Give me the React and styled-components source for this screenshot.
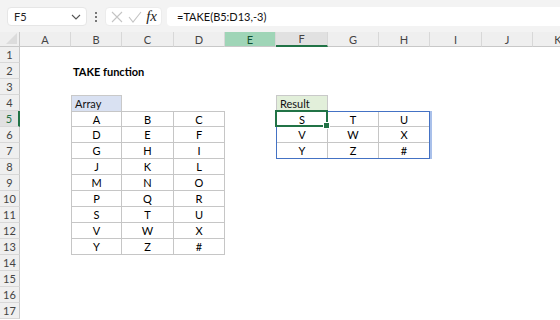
import React from "react";
import styled, { createGlobalStyle } from "styled-components";

const GlobalStyle = createGlobalStyle`
  body {
    margin: 0;
    background: #fff;
    font-family: "Lato", "Open Sans", sans-serif;
  }
`;

const COLS = ["A", "B", "C", "D", "E", "F", "G", "H", "I", "J", "K"];
const WIDTHS = [51, 51, 52, 51, 51, 52, 51, 51, 52, 51, 51];
const ROWS = 17;

const ARRAY = [
  ["A", "B", "C"],
  ["D", "E", "F"],
  ["G", "H", "I"],
  ["J", "K", "L"],
  ["M", "N", "O"],
  ["P", "Q", "R"],
  ["S", "T", "U"],
  ["V", "W", "X"],
  ["Y", "Z", "#"],
];

const RESULT = ARRAY.slice(-3);

const Window = styled.div`
  width: 560px;
  height: 320px;
  overflow: hidden;
  background: #fff;
`;

const TopBar = styled.div`
  height: 32px;
  box-sizing: border-box;
  background: #f3f3f3;
  display: flex;
  align-items: flex-start;
  padding: 7px 0 0 7px;
`;

const NameBox = styled.div`
  width: 80px;
  height: 19px;
  box-sizing: border-box;
  background: #fff;
  border: 1px solid #e6e6e6;
  border-radius: 4px;
  display: flex;
  align-items: center;
  justify-content: space-between;
  padding: 0 5px 0 6px;
  font-size: 11px;
  color: #222;
`;

const Dots = styled.div`
  width: 18px;
  height: 19px;
  display: flex;
  flex-direction: column;
  align-items: center;
  justify-content: center;
  gap: 2px;

  span {
    width: 2px;
    height: 2px;
    background: #777;
  }
`;

const IconBox = styled.div`
  width: 57px;
  height: 19px;
  box-sizing: border-box;
  background: #fff;
  border-radius: 4px;
  border: 1px solid #ececec;
  display: flex;
  align-items: center;
  justify-content: space-between;
  padding: 0 4px 0 5px;
`;

const Fx = styled.span`
  font-family: "Liberation Serif", serif;
  font-style: italic;
  font-size: 15px;
  color: #222;
  line-height: 1;
`;

const FormulaBox = styled.div`
  flex: 1;
  height: 19px;
  margin-left: 5px;
  box-sizing: border-box;
  background: #fff;
  border-radius: 4px 0 0 4px;
  display: flex;
  align-items: center;
  padding-left: 10px;
  font-size: 11px;
  color: #111;
`;

const Sheet = styled.div`
  display: grid;
  grid-template-columns: 20px ${WIDTHS.map((w) => `${w}px`).join(" ")};
  grid-template-rows: 15px repeat(${ROWS}, 16px);
  font-size: 11px;
`;

const Corner = styled.div`
  grid-column: 1;
  grid-row: 1;
  background: #efefef;
  border-right: 1px solid #c8c8c8;
  border-bottom: 1px solid #c8c8c8;
  position: relative;

  &::after {
    content: "";
    position: absolute;
    right: 2px;
    bottom: 2px;
    border-left: 11px solid transparent;
    border-bottom: 11px solid #dcdcdc;
  }
`;

const ColHead = styled.div`
  grid-column: ${(p) => p.$col};
  grid-row: 1;
  box-sizing: border-box;
  display: flex;
  align-items: center;
  justify-content: center;
  background: ${(p) => (p.$state === "sel" ? "#9fd5b7" : p.$state === "active" ? "#e1e1e1" : "#efefef")};
  border-right: 1px solid #d8d8d8;
  border-bottom: ${(p) => (p.$state === "active" ? "2px solid #217346" : "1px solid #c8c8c8")};
  color: ${(p) => (p.$state === "sel" ? "#0f5132" : "#444")};
`;

const RowHead = styled.div`
  grid-column: 1;
  grid-row: ${(p) => p.$row};
  box-sizing: border-box;
  display: flex;
  align-items: center;
  justify-content: center;
  color: ${(p) => (p.$active ? "#217346" : "#444")};
  background: ${(p) => (p.$active ? "#e1e1e1" : "#efefef")};
  border-bottom: 1px solid #d8d8d8;
  border-right: ${(p) => (p.$active ? "2px solid #217346" : "1px solid #c8c8c8")};
`;

const Title = styled.div`
  grid-column: 3 / span 3;
  grid-row: 3;
  display: flex;
  align-items: center;
  padding-left: 2px;
  font-weight: 700;
  color: #000;
`;

const Label = styled.div`
  grid-column: ${(p) => p.$col};
  grid-row: 5;
  box-sizing: border-box;
  display: flex;
  align-items: center;
  padding-left: 3px;
  background: ${(p) => p.$bg};
  border: 1px solid #c9c9c9;
  border-bottom: none;
  color: #111;
`;

const Cell = styled.div`
  grid-column: ${(p) => p.$col};
  grid-row: ${(p) => p.$row};
  box-sizing: border-box;
  display: flex;
  align-items: center;
  justify-content: center;
  color: #000;
  border-right: 1px solid #c6c6c6;
  border-bottom: 1px solid #c6c6c6;
  border-left: ${(p) => (p.$first ? "1px solid #c6c6c6" : "none")};
  border-top: ${(p) => (p.$top ? "1px solid #c6c6c6" : "none")};
`;

const Range = styled.div`
  grid-column: 7 / span 3;
  grid-row: 6 / span 3;
  border: 1px solid #4472c4;
  box-shadow: 2px 0 0 #a9c0ea;
  pointer-events: none;
  z-index: 1;
`;

const Active = styled.div`
  grid-column: 7;
  grid-row: 6;
  margin: -1px 0 0 -1px;
  border: 2px solid #217346;
  position: relative;
  pointer-events: none;
  z-index: 2;

  &::after {
    content: "";
    position: absolute;
    right: -4px;
    bottom: -4px;
    width: 5px;
    height: 5px;
    background: #217346;
    border: 1px solid #fff;
  }
`;

const Chevron = () => (
  <svg width="10" height="6" viewBox="0 0 10 6">
    <path d="M1 1l4 4 4-4" fill="none" stroke="#555" strokeWidth="1.1" />
  </svg>
);

const Cross = () => (
  <svg width="12" height="12" viewBox="0 0 12 12">
    <path d="M1 1l10 10M11 1L1 11" stroke="#c4c4c4" strokeWidth="1.1" />
  </svg>
);

const Check = () => (
  <svg width="14" height="12" viewBox="0 0 14 12">
    <path d="M1 6l4 5 8-10" fill="none" stroke="#c4c4c4" strokeWidth="1.1" />
  </svg>
);

const App = () => {
  return (
    <Window>
      <GlobalStyle />
      <TopBar>
        <NameBox>
          <span>F5</span>
          <Chevron />
        </NameBox>
        <Dots>
          <span />
          <span />
          <span />
        </Dots>
        <IconBox>
          <Cross />
          <Check />
          <Fx>fx</Fx>
        </IconBox>
        <FormulaBox>=TAKE(B5:D13,-3)</FormulaBox>
      </TopBar>

      <Sheet>
        <Corner />
        {COLS.map((c, i) => (
          <ColHead key={c} $col={i + 2} $state={c === "E" ? "sel" : c === "F" ? "active" : ""}>
            {c}
          </ColHead>
        ))}
        {Array.from({ length: ROWS }, (_, i) => (
          <RowHead key={i} $row={i + 2} $active={i + 1 === 5}>
            {i + 1}
          </RowHead>
        ))}

        <Title>TAKE function</Title>

        <Label $col="3 / span 1" $bg="#d9e1f2">Array</Label>
        {ARRAY.map((row, r) =>
          row.map((v, c) => (
            <Cell key={`a${r}${c}`} $col={c + 3} $row={r + 6} $first={c === 0} $top={r === 0}>
              {v}
            </Cell>
          ))
        )}

        <Label $col="7 / span 1" $bg="#e2efda">Result</Label>
        {RESULT.map((row, r) =>
          row.map((v, c) => (
            <Cell key={`r${r}${c}`} $col={c + 7} $row={r + 6} $first={c === 0} $top={r === 0}>
              {v}
            </Cell>
          ))
        )}
        <Range />
        <Active />
      </Sheet>
    </Window>
  );
};

export default App;
